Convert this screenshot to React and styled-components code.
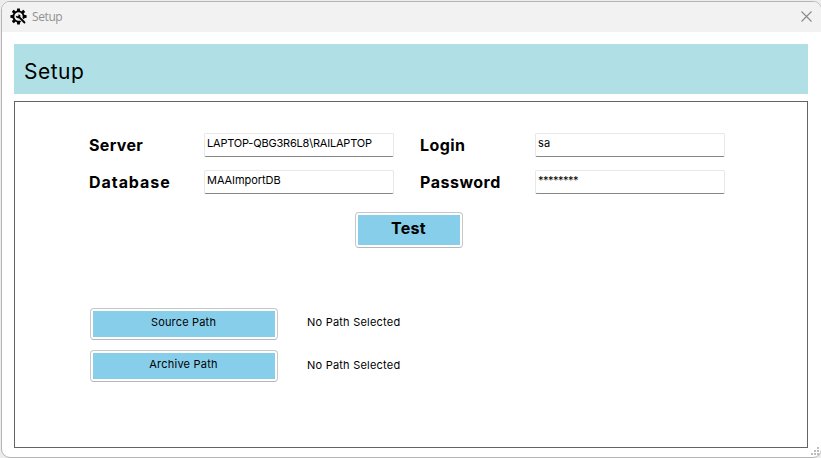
import React from "react";
import styled, { createGlobalStyle } from "styled-components";

const GlobalStyle = createGlobalStyle`
  * { box-sizing: border-box; }
  html, body { margin: 0; background: #ededed; overflow: hidden; }
`;

const Window = styled.div`
  position: relative;
  width: 821px;
  height: 457px;
  margin-top: 1px;
  padding-left: 1px;
  font-family: "Inter", "Open Sans", sans-serif;
  color: #000;
`;

const Frame = styled.main`
  width: 821px;
  height: 457px;
  border: 1px solid #b5b5b5;
  border-radius: 9px;
  background: #fff;
  overflow: hidden;
`;

const TitleBar = styled.header`
  display: flex;
  align-items: center;
  height: 30px;
  padding: 0 9px 1px 8px;
  background: #f2f2f2;
`;

const WindowTitle = styled.span`
  flex: 1;
  margin-left: 5px;
  padding-top: 1px;
  font: 12px/16px "Open Sans", sans-serif;
  letter-spacing: -0.4px;
  color: #919191;
`;

const CloseButton = styled.button`
  display: flex;
  padding: 0;
  border: 0;
  background: none;
`;

const Banner = styled.h1`
  display: flex;
  align-items: center;
  width: 794px;
  height: 50px;
  margin: 12px 0 7px 12px;
  padding: 4px 0 0 10px;
  background: #b0e0e6;
  font-size: 21px;
  font-weight: 400;
  letter-spacing: ${(p) => p.$spacing}px;
`;

const Panel = styled.section`
  width: 794px;
  height: 347px;
  margin-left: 12px;
  padding: 31px 0 0 74px;
  border: 1px solid #646464;
`;

const Fields = styled.div`
  display: grid;
  grid-template-columns: 115px 190px 141px 190px;
  grid-template-rows: 24px 24px;
  row-gap: 13px;

  & > label:nth-of-type(even) {
    padding-left: 26px;
  }
`;

const Label = styled.label`
  font-size: 16px;
  font-weight: 700;
  line-height: 25px;
  letter-spacing: ${(p) => p.$spacing}px;
  white-space: nowrap;
`;

const Input = styled.div`
  height: 24px;
  padding-left: 2px;
  border: 1px solid #e8e8e8;
  border-bottom-color: #868686;
  border-radius: 2px;
  font-size: 11px;
  line-height: 19px;
  letter-spacing: ${(p) => p.$spacing}px;
  white-space: nowrap;
`;

const Button = styled.button`
  display: block;
  width: ${(p) => p.$width}px;
  height: ${(p) => p.$height}px;
  padding: 2px;
  border: 1px solid #c8c8c8;
  border-bottom-color: #b8b8b8;
  border-radius: 4px;
  background: #fff;
`;

const ButtonFace = styled.span`
  display: block;
  height: 100%;
  padding-right: 1px;
  background: #87ceeb;
  font-family: "Inter", sans-serif;
  color: #000;
  font-size: ${(p) => (p.$strong ? 16 : 11)}px;
  font-weight: ${(p) => (p.$strong ? 700 : 400)};
  line-height: ${(p) => (p.$strong ? 27 : 23)}px;
  letter-spacing: ${(p) => p.$spacing}px;
`;

const TestRow = styled.div`
  padding: 18px 0 60px 266px;
`;

const PathRow = styled.div`
  display: flex;
  margin: 0 0 10px 1px;
`;

const PathText = styled.span`
  margin-left: 29px;
  font-size: 11px;
  line-height: ${(p) => p.$line}px;
  letter-spacing: 0.22px;
`;

const Grip = styled.svg`
  position: absolute;
  right: 2px;
  bottom: 3px;
`;

const teeth = [0, 45, 90, 135, 180, 225, 270, 315];

function GearIcon() {
  return (
    <svg width="17" height="17" viewBox="0 0 17 17">
      {teeth.map((a) => (
        <path key={a} d="M6.8 3 7.2.4h2.6l.4 2.6z" transform={`rotate(${a} 8.5 8.5)`} />
      ))}
      <circle cx="8.5" cy="8.5" r="5.1" fill="none" stroke="#000" strokeWidth="1.9" />
      <path d="m10 10 5 5" stroke="#f2f2f2" strokeWidth="3.6" />
      <path d="m8.5 8.5 6 6" stroke="#000" strokeWidth="1.8" strokeLinecap="round" />
      <path d="M8.6 6 10.5 7.6 10 9.6 8.2 10.6 6 9.2 5.8 7.6 7.4 8.6 8.7 7.8z" />
    </svg>
  );
}

function CloseIcon() {
  return (
    <svg width="11" height="11" viewBox="0 0 11 11" fill="none" stroke="#888" strokeWidth="1.1">
      <path d="m.5.5 10 10M10.5.5l-10 10" />
    </svg>
  );
}

const dots = [[6, 0], [3, 3], [6, 3], [0, 6], [3, 6], [6, 6]];

export default function App() {
  return (
    <>
      <GlobalStyle />
      <Window>
        <Frame>
          <TitleBar>
            <GearIcon />
            <WindowTitle>Setup</WindowTitle>
            <CloseButton aria-label="Close"><CloseIcon /></CloseButton>
          </TitleBar>
          <Banner $spacing={0.5}>Setup</Banner>
          <Panel>
            <Fields>
              <Label $spacing={0.35}>Server</Label>
              <Input $spacing={-0.2}>LAPTOP-QBG3R6L8\RAILAPTOP</Input>
              <Label $spacing={0.4}>Login</Label>
              <Input $spacing={0.3}>sa</Input>
              <Label $spacing={0.95}>Database</Label>
              <Input $spacing={-0.06}>MAAImportDB</Input>
              <Label $spacing={0.5}>Password</Label>
              <Input $spacing={-0.5}>********</Input>
            </Fields>
            <TestRow>
              <Button $width={108} $height={36}>
                <ButtonFace $strong $spacing={0.3}>Test</ButtonFace>
              </Button>
            </TestRow>
            <PathRow>
              <Button $width={188} $height={32}><ButtonFace $spacing={0.18}>Source Path</ButtonFace></Button>
              <PathText $line={29}>No Path Selected</PathText>
            </PathRow>
            <PathRow>
              <Button $width={188} $height={32}><ButtonFace $spacing={0.22}>Archive Path</ButtonFace></Button>
              <PathText $line={31}>No Path Selected</PathText>
            </PathRow>
          </Panel>
        </Frame>
        <Grip width="8" height="8" viewBox="0 0 8 8" fill="#bdbdbd">
          {dots.map(([x, y]) => <rect key={`${x}-${y}`} x={x} y={y} width="2" height="2" />)}
        </Grip>
      </Window>
    </>
  );
}
